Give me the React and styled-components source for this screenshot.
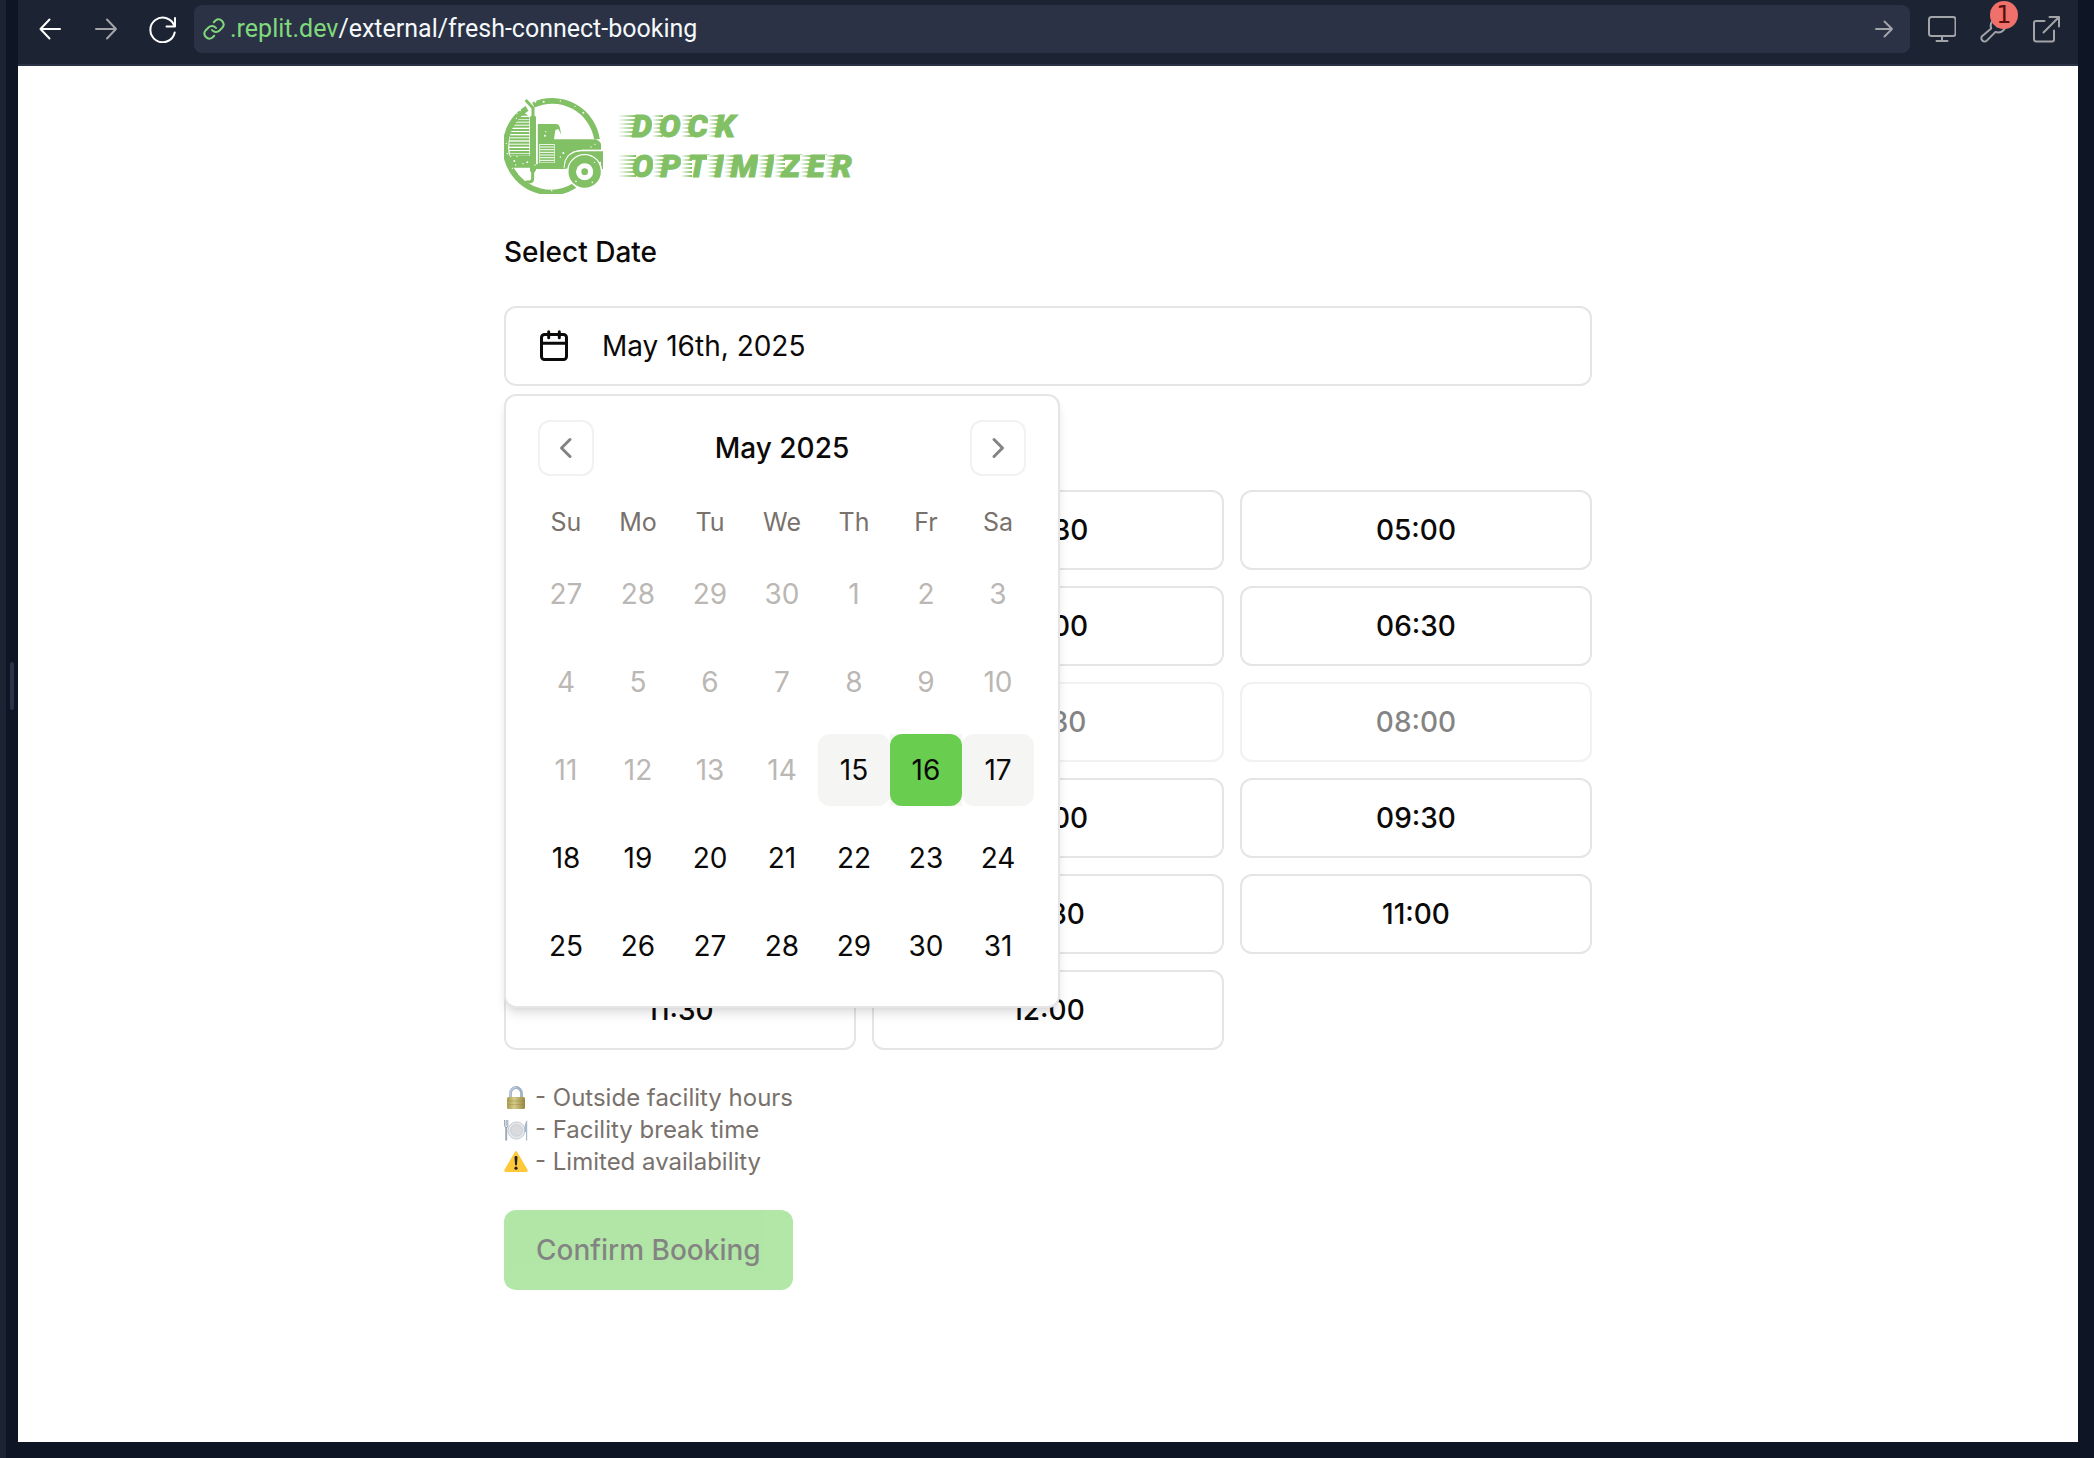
import React from "react";
import styled, { createGlobalStyle, css } from "styled-components";

const GlobalStyle = createGlobalStyle`
  *, *::before, *::after { box-sizing: border-box; }
  body {
    margin: 0;
    background: #0e1525;
    color: #0c0a09;
    font-family: Inter, "Liberation Sans", sans-serif;
  }
  button, input { font: inherit; color: inherit; }
`;

/* ---------- workspace shell ---------- */

const Workspace = styled.div`
  display: flex;
  min-height: 100vh;
`;

const SidePane = styled.div`
  width: 6px;
  background: #1c2333;
`;

const Splitter = styled.div`
  width: 12px;
  display: flex;
  align-items: center;
  justify-content: center;
  padding-bottom: 86px;

  &::before {
    content: "";
    width: 4px;
    height: 48px;
    border-radius: 2px;
    background: #2b3245;
  }
`;

const Preview = styled.div`
  flex: 1;
  min-width: 0;
  display: flex;
  flex-direction: column;
  margin: 0 16px 16px 0;
`;

const Toolbar = styled.header`
  display: flex;
  align-items: center;
  gap: 18px;
  padding: 5px 18px 11px;
  background: #1c2333;
  border-bottom: 2px solid #2b3245;
`;

const ToolGroup = styled.div`
  display: flex;
  gap: ${(p) => p.$gap}px;
`;

const ToolButton = styled.button`
  position: relative;
  display: flex;
  align-items: center;
  justify-content: center;
  width: 28px;
  height: 28px;
  padding: 0;
  border: 0;
  background: none;
  color: ${(p) => (p.$bright ? "#ffffff" : "#a2a4a8")};
  cursor: pointer;
`;

const Badge = styled.span`
  position: absolute;
  top: -14px;
  right: -10px;
  width: 28px;
  height: 28px;
  border-radius: 50%;
  background: #f0706c;
  color: #5a0f0c;
  font: 24px/28px "DejaVu Sans", sans-serif;
  text-align: center;
`;

const AddressBar = styled.div`
  flex: 1;
  display: flex;
  align-items: center;
  height: 48px;
  padding: 0 12px 0 8px;
  border-radius: 8px;
  background: #2b3245;
  color: #f5f9fc;
  font-family: Roboto, "Noto Sans", sans-serif;
  font-size: 25px;
  line-height: 32px;
`;

const Host = styled.label`
  display: flex;
  align-items: center;
  gap: 4px;
  color: #80d97d;
`;

const PathInput = styled.input`
  flex: 1;
  min-width: 0;
  padding: 0;
  border: 0;
  outline: 0;
  background: none;
`;

/* ---------- booking page ---------- */

const Page = styled.main`
  flex: 1;
  padding: 32px;
  background: #ffffff;
`;

const Column = styled.form`
  display: flex;
  flex-direction: column;
  width: 100%;
  max-width: 1088px;
  margin: 0 auto;
`;

const Brand = styled.div`
  display: flex;
  align-items: center;
  gap: 15px;
  height: 96px;
  margin-bottom: 44px;
  color: #82c065;
`;

const BrandName = styled.div`
  font-family: Roboto, sans-serif;
  font-size: 32px;
  font-weight: 900;
  font-style: italic;
  line-height: 40px;
  -webkit-text-stroke: 1px #82c065;
`;

const BrandLine = styled.div`
  white-space: nowrap;
`;

const SpeedLetter = styled.span`
  padding-left: 7px;
  background-image: linear-gradient(to right, #ffffff, rgba(255, 255, 255, 0)),
    repeating-linear-gradient(to bottom, #82c065 0 2px, #ffffff 2px 4px);
  background-size: 11px 22px;
  background-position: left center;
  background-repeat: no-repeat;

  &:first-child {
    padding-left: 14px;
    background-size: 18px 22px;
  }
`;

const FieldLabel = styled.label`
  font-size: 28px;
  font-weight: 500;
  line-height: 28px;
`;

const DateField = styled.div`
  position: relative;
  margin: 40px 0 36px;
`;

const outline = css`
  height: 80px;
  border: 2px solid #e5e5e5;
  border-radius: 12px;
  background: #ffffff;
  font-size: 28px;
  cursor: pointer;
`;

const DateButton = styled.button`
  ${outline}
  display: flex;
  align-items: center;
  gap: 32px;
  width: 100%;
  padding: 0 32px;
  text-align: left;
`;

const Popover = styled.div`
  position: absolute;
  top: 88px;
  left: 0;
  z-index: 1;
  padding: 24px;
  border: 2px solid #e5e5e5;
  border-radius: 12px;
  background: #ffffff;
  box-shadow: 0 8px 12px -2px rgba(0, 0, 0, 0.1), 0 4px 8px -4px rgba(0, 0, 0, 0.1);
`;

const MonthBar = styled.div`
  display: flex;
  align-items: center;
  justify-content: space-between;
  padding: 0 8px;
  margin-bottom: 26px;
  font-size: 28px;
  font-weight: 500;
`;

const MonthButton = styled.button`
  display: flex;
  align-items: center;
  justify-content: center;
  width: 56px;
  height: 56px;
  padding: 0;
  border: 2px solid #e5e5e5;
  border-radius: 12px;
  background: none;
  opacity: 0.5;
  cursor: pointer;
`;

const Calendar = styled.table`
  display: block;
  border-collapse: collapse;
  thead, tbody { display: block; }
`;

const Week = styled.tr`
  display: flex;
  margin-top: ${(p) => (p.$head ? 0 : 16)}px;
`;

const Weekday = styled.th`
  width: 72px;
  padding: 0;
  color: #78716c;
  font-size: 25px;
  font-weight: 400;
  line-height: 40px;
`;

const DayCell = styled.td`
  width: 72px;
  height: 72px;
  padding: 0;
  background: ${(p) => (p.$selected ? "#f5f5f4" : "none")};
`;

const Day = styled.button`
  width: 72px;
  height: 72px;
  padding: 0;
  border: 0;
  border-radius: 12px;
  font-size: 28px;
  background: ${(p) => (p.$selected ? "#69cd50" : p.$tinted ? "#f5f5f4" : "none")};
  &:disabled { color: #78716c; opacity: 0.5; }
`;

const Slots = styled.div`
  display: grid;
  grid-template-columns: repeat(3, 1fr);
  gap: 16px;
  margin: 40px 0 32px;
`;

const Slot = styled.button`
  ${outline}
  font-weight: 500;
  &:disabled { opacity: 0.5; }
`;

const Legend = styled.ul`
  margin: 0 0 32px;
  padding: 0;
  list-style: none;
  color: #78716c;
  font-size: 24px;
  line-height: 32px;
`;

const LegendItem = styled.li`
  display: flex;
  align-items: center;
  gap: 7px;
`;

const Confirm = styled.button`
  align-self: flex-start;
  height: 80px;
  padding: 0 32px;
  border: 0;
  border-radius: 12px;
  background: #66cf51;
  font-size: 28px;
  font-weight: 500;
  &:disabled { color: #0c0a09; opacity: 0.5; }
`;

/* ---------- drawings ---------- */

const Icon = ({ size = 28, stroke = 2, children }) => (
  <svg width={size} height={size} viewBox={`0 0 ${size} ${size}`} fill="none" stroke="currentColor"
    strokeWidth={stroke} strokeLinecap="round" strokeLinejoin="round" aria-hidden="true">
    {children}
  </svg>
);

const BackIcon = () => <Icon><path d="M24 14H4.500M13.500 4.500L4.500 14l9 9.500" /></Icon>;
const ForwardIcon = () => <Icon><path d="M4 14h20M15 4.500l9 9.500-9 9.500" /></Icon>;
const ReloadIcon = () => (
  <Icon><path d="M27 3v8.500h-8.500M26.500 11.500A12.300 12.300 0 1 0 26.700 17.500" /></Icon>
);
const LinkIcon = () => (
  <Icon size={24} stroke={2}>
    <path d="M10 13a5 5 0 0 0 7.500.5l3-3a5 5 0 0 0-7-7L11.800 5.200" />
    <path d="M14 11a5 5 0 0 0-7.500-.5l-3 3a5 5 0 0 0 7 7l1.700-1.700" />
  </Icon>
);
const GoIcon = () => <Icon><path d="M6 14h16M14.500 6.500L22 14l-7.500 7.500" /></Icon>;
const MonitorIcon = () => (
  <Icon><rect x="1" y="2" width="26.500" height="19" rx="2.500" /><path d="M14 21v5M8.500 26h11" /></Icon>
);
const WrenchIcon = () => (
  <Icon>
    <path d="M18.200 3.200a7.500 7.500 0 0 0-7 10.200L2.300 21a3.200 3.200 0 0 0 4.500 4.600l8.700-8.700a7.600 7.600 0 0 0 10-9l-4.600 4.500-3.800-1-1-3.800 4.300-4.400z" />
  </Icon>
);
const ExternalIcon = () => (
  <Icon><path d="M12.500 6H4a2 2 0 0 0-2 2v16a2.500 2.500 0 0 0 2.500 2.500H20a2 2 0 0 0 2-2V15.500M17.500 2H27v9.500M27 2L11.500 17.500" /></Icon>
);
const CalendarIcon = () => (
  <Icon size={32} stroke={3}>
    <rect x="3.500" y="4.500" width="25" height="25" rx="3" /><path d="M3.500 13.300h25M10.700 1.800v6M21.300 1.800v6" />
  </Icon>
);
const ChevronIcon = ({ right }) => (
  <Icon size={32} stroke={3}><path d={right ? "M12 7.500l8.500 8.500-8.500 8.500" : "M20 7.500L11.500 16l8.500 8.500"} /></Icon>
);

const LockEmoji = () => (
  <svg width="24" height="24" viewBox="0 0 24 24" role="img" aria-label="Locked">
    <defs>
      <linearGradient id="brass" x1="0" x2="1"><stop offset="0" stopColor="#a89c50" /><stop offset=".4" stopColor="#d5cb87" /><stop offset="1" stopColor="#948741" /></linearGradient>
    </defs>
    <path d="M6.500 13V7.500a5.500 6 0 0 1 11 0V13" fill="none" stroke="#9fb2c6" strokeWidth="2.800" />
    <path d="M6.200 12V7.500a5.800 6.300 0 0 1 6-6.200" fill="none" stroke="#c8d5e2" strokeWidth="1" />
    <rect x="3" y="11" width="18" height="12" rx="1.500" fill="url(#brass)" />
    <path d="M3.500 15h17M3.500 18.500h17" stroke="#94873e" strokeWidth=".6" opacity=".6" />
  </svg>
);
const PlateEmoji = () => (
  <svg width="24" height="24" viewBox="0 0 24 24" role="img" aria-label="Plate">
    <circle cx="12.500" cy="12.500" r="8.600" fill="#e4e6e9" stroke="#c9ccd1" />
    <circle cx="12.500" cy="12.500" r="5.800" fill="#d9dbdf" stroke="#c2c5ca" strokeWidth=".7" />
    <path d="M2.200 9v13.500" stroke="#9eabb8" strokeWidth="2" />
    <path d="M.6 2v5.500q0 2 1.600 2t1.600-2V2M2.200 2v6" fill="none" stroke="#8999a8" strokeWidth=".9" />
    <path d="M22 22.500V14h-1.500Q20 5 23.200 2v20.500z" fill="#a4b8c9" />
  </svg>
);
const WarningEmoji = () => (
  <svg width="24" height="24" viewBox="0 0 24 24" role="img" aria-label="Warning">
    <path d="M11 1.800q1-1.500 2 0l10.600 18q.8 2-1.200 2.200H1.600q-2-.2-1.200-2.200z" fill="#fdc93a" />
    <path d="M10.500 7.500q0-1.400 1.500-1.400t1.500 1.400l-.6 7.500q-.9.900-1.800 0z" fill="#26221a" />
    <circle cx="12" cy="18.200" r="1.600" fill="#26221a" />
  </svg>
);

const TruckLogo = () => {
  const stripes = [[99, 70], [107, 63], [116, 57], [125, 53], [135, 49], [144, 47], [154, 45], [163, 44], [173, 43], [182, 43], [192, 43], [201, 44], [209, 44]];
  const specks = [[58, 228], [66, 215], [84, 236], [97, 232], [62, 240], [47, 214], [150, 152], [152, 140], [196, 216], [205, 204], [120, 240], [66, 86], [75, 76], [34, 175], [37, 206], [146, 50], [196, 48], [240, 64], [265, 83], [52, 250], [72, 268], [90, 285], [288, 186], [300, 178], [121, 50], [170, 317], [64, 100]];
  return (
    <svg width="99" height="96" viewBox="27 39 297 288" fill="currentColor" role="img" aria-label="Dock Optimizer truck">
      <g fill="none" stroke="currentColor" strokeWidth="17">
        <path d="M115 60A136 136 0 0 1 306 163" />
        <path d="M239 302A136 136 0 0 1 96 70" />
      </g>
      <path d="M45 130Q55 100 80 78L100 92H76L50 130zM40 212h66v36H52z" />
      <g stroke="currentColor" strokeWidth="6">
        {stripes.map(([y, x]) => <path key={y} d={`M${x} ${y}H103`} />)}
      </g>
      <path d="M92 45L114 69V95M113 258V282Q112 291 102 291H74" fill="none" stroke="currentColor" strokeWidth="9" />
      <path d="M105 95q9-7 18 0v160q-3 9-10 9t-8-9z" />
      <path d="M128 117h56q8 0 10 8l5 24-9-17-9 3-4 28h113q22 0 28 13v18H262q-46 3-52 42l-1 16H123v-15h5z" />
      <rect x="124" y="117" width="3" height="121" fill="#fff" />
      <rect x="133" y="177" width="46" height="57" fill="#fff" />
      <g stroke="currentColor" strokeWidth="5">
        {[182, 190, 198, 206, 214, 222, 230].map((y) => <path key={y} d={`M135 ${y}h42`} />)}
      </g>
      <path d="M209 252Q208 200 262 199H324V252H318V230Z" />
      <circle cx="269" cy="260" r="51" fill="none" stroke="#fff" strokeWidth="4" />
      <path d="M207 248Q208 198 260 196H319" fill="none" stroke="#fff" strokeWidth="3" />
      <circle cx="269" cy="260" r="37" fill="none" stroke="currentColor" strokeWidth="23" />
      <circle cx="269" cy="260" r="25" fill="#fff" />
      <circle cx="269" cy="260" r="10" />
      <g fill="#fff">
        {specks.map(([x, y], i) => <circle key={i} cx={x} cy={y} r={i % 3 === 0 ? 3 : 2} />)}
        <circle cx="243" cy="289" r="2.500" /><circle cx="292" cy="292" r="2.500" /><circle cx="298" cy="232" r="2" />
      </g>
    </svg>
  );
};

/* ---------- data ---------- */

const WEEKDAYS = ["Su", "Mo", "Tu", "We", "Th", "Fr", "Sa"];
const WEEKS = [
  [27, 28, 29, 30, 1, 2, 3],
  [4, 5, 6, 7, 8, 9, 10],
  [11, 12, 13, 14, 15, 16, 17],
  [18, 19, 20, 21, 22, 23, 24],
  [25, 26, 27, 28, 29, 30, 31],
];
const SLOTS = [
  "04:00", "04:30", "05:00", "05:30", "06:00", "06:30", "07:00", "07:30", "08:00",
  "08:30", "09:00", "09:30", "10:00", "10:30", "11:00", "11:30", "12:00",
];
const TAKEN = ["07:00", "07:30", "08:00"];

const SpeedText = ({ children }) => (
  <BrandLine>{[...children].map((c, i) => <SpeedLetter key={i}>{c}</SpeedLetter>)}</BrandLine>
);

export default function App() {
  return (
    <Workspace>
      <GlobalStyle />
      <SidePane />
      <Splitter />
      <Preview>
        <Toolbar>
          <ToolGroup $gap={28}>
            <ToolButton $bright aria-label="Back"><BackIcon /></ToolButton>
            <ToolButton aria-label="Forward"><ForwardIcon /></ToolButton>
            <ToolButton $bright aria-label="Reload"><ReloadIcon /></ToolButton>
          </ToolGroup>
          <AddressBar>
            <Host htmlFor="path"><LinkIcon />.replit.dev</Host>
            <PathInput id="path" defaultValue="/external/fresh-connect-booking" />
            <ToolButton aria-label="Go"><GoIcon /></ToolButton>
          </AddressBar>
          <ToolGroup $gap={24}>
            <ToolButton aria-label="Screen size"><MonitorIcon /></ToolButton>
            <ToolButton aria-label="Developer tools"><WrenchIcon /><Badge>1</Badge></ToolButton>
            <ToolButton aria-label="Open in new tab"><ExternalIcon /></ToolButton>
          </ToolGroup>
        </Toolbar>
        <Page>
          <Column onSubmit={(e) => e.preventDefault()}>
            <Brand>
              <TruckLogo />
              <BrandName>
                <SpeedText>DOCK</SpeedText>
                <SpeedText>OPTIMIZER</SpeedText>
              </BrandName>
            </Brand>
            <FieldLabel htmlFor="date">Select Date</FieldLabel>
            <DateField>
              <DateButton id="date" type="button"><CalendarIcon />May 16th, 2025</DateButton>
              <Popover>
                <MonthBar>
                  <MonthButton type="button" aria-label="Previous month"><ChevronIcon /></MonthButton>
                  May 2025
                  <MonthButton type="button" aria-label="Next month"><ChevronIcon right /></MonthButton>
                </MonthBar>
                <Calendar>
                  <thead>
                    <Week $head>{WEEKDAYS.map((d) => <Weekday key={d} scope="col">{d}</Weekday>)}</Week>
                  </thead>
                  <tbody>
                    {WEEKS.map((week, w) => (
                      <Week key={w}>
                        {week.map((d) => {
                          const past = w < 2 || (w === 2 && d < 15);
                          const selected = w === 2 && d === 16;
                          const tinted = w === 2 && (d === 15 || d === 17);
                          return (
                            <DayCell key={d} $selected={selected}>
                              <Day type="button" disabled={past} $selected={selected} $tinted={tinted}>{d}</Day>
                            </DayCell>
                          );
                        })}
                      </Week>
                    ))}
                  </tbody>
                </Calendar>
              </Popover>
            </DateField>
            <FieldLabel as="div">Select Time</FieldLabel>
            <Slots>
              {SLOTS.map((t) => <Slot key={t} type="button" disabled={TAKEN.includes(t)}>{t}</Slot>)}
            </Slots>
            <Legend>
              <LegendItem><LockEmoji />- Outside facility hours</LegendItem>
              <LegendItem><PlateEmoji />- Facility break time</LegendItem>
              <LegendItem><WarningEmoji />- Limited availability</LegendItem>
            </Legend>
            <Confirm disabled>Confirm Booking</Confirm>
          </Column>
        </Page>
      </Preview>
    </Workspace>
  );
}
